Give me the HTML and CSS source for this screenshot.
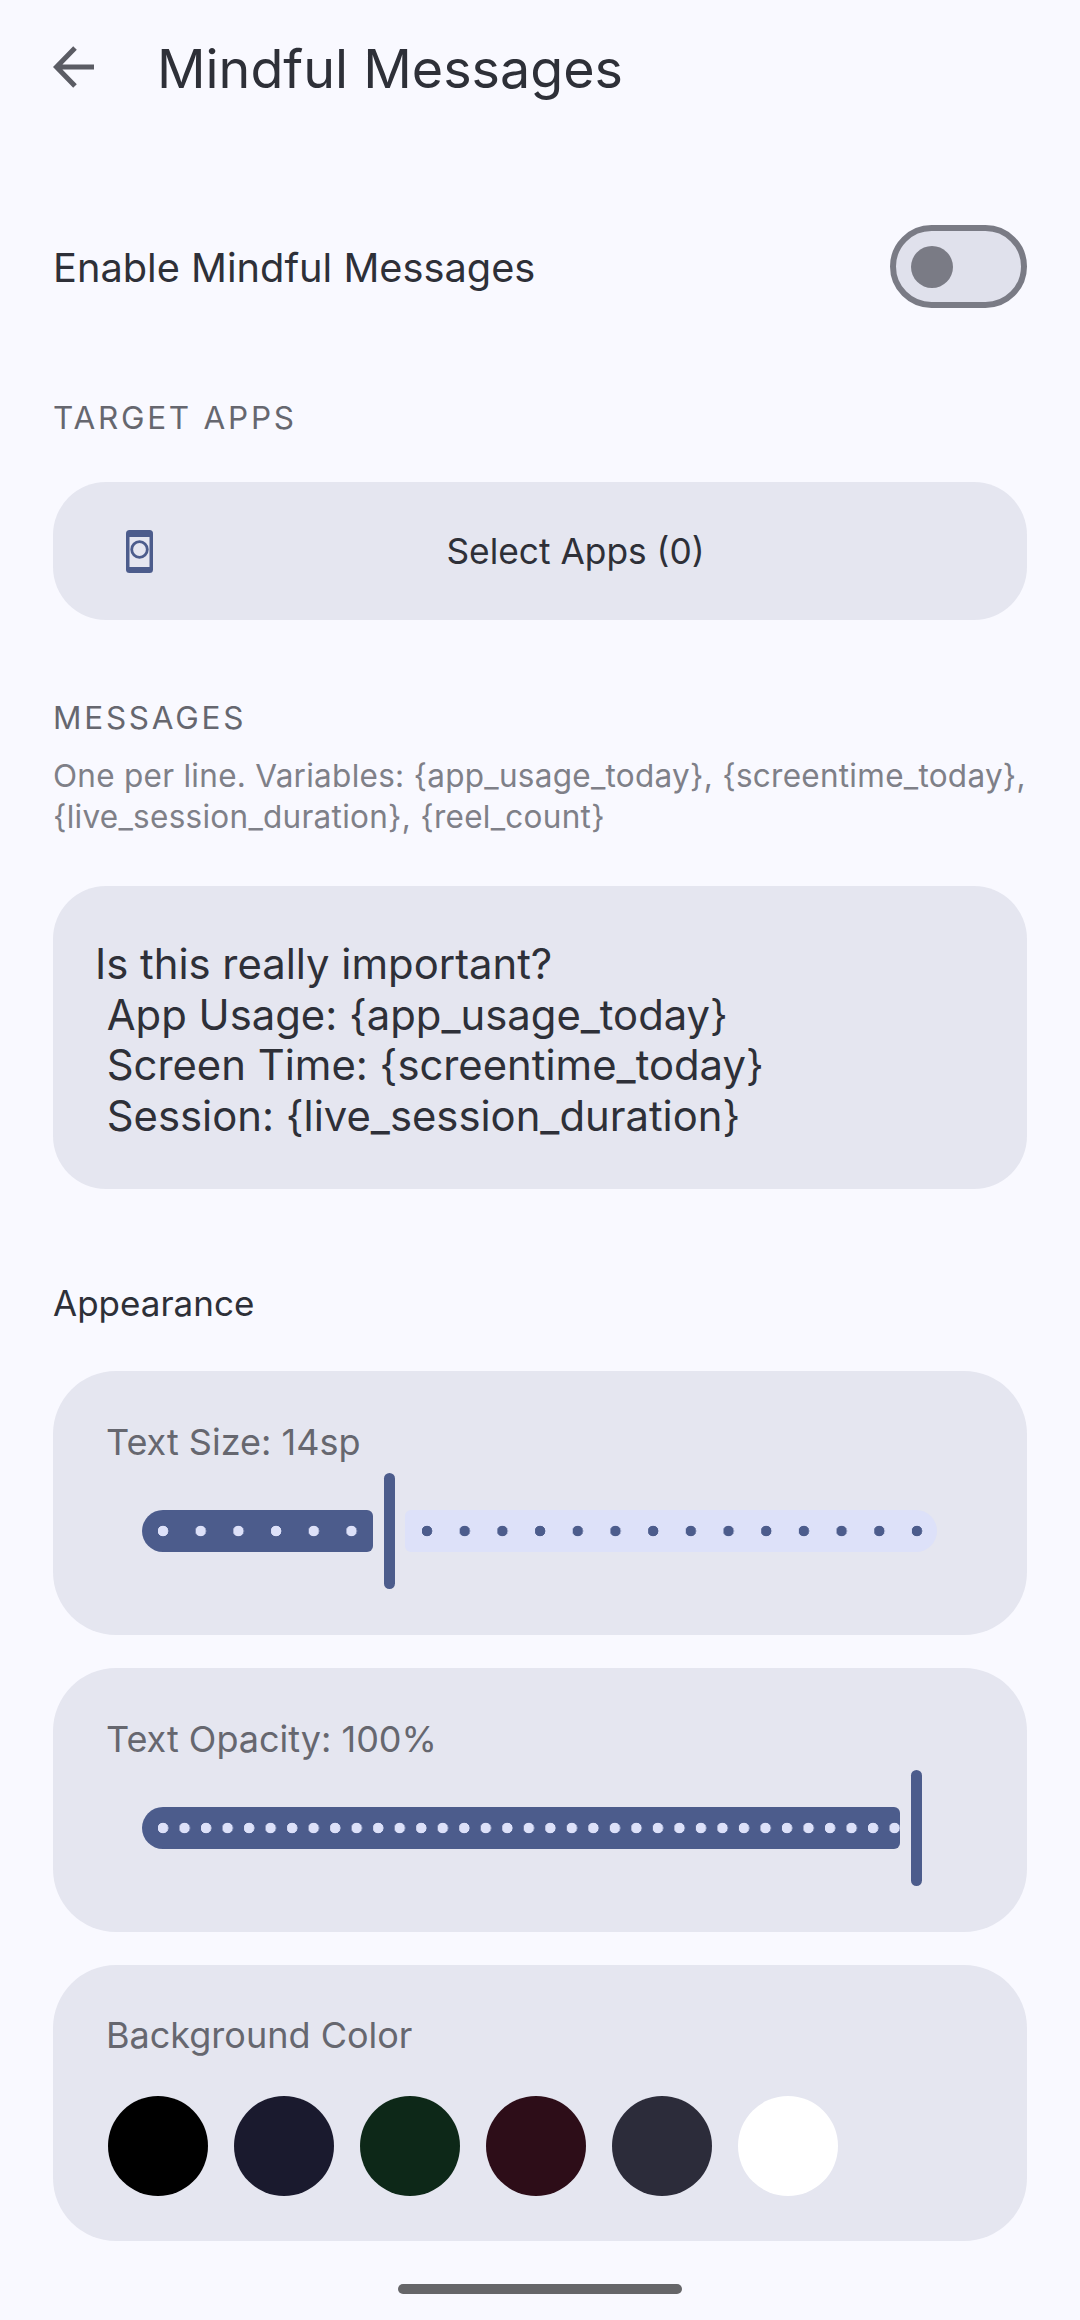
FILE: index.html
```html
<!DOCTYPE html>
<html lang="en">
<head>
<meta charset="utf-8">
<title>Mindful Messages</title>
<link rel="stylesheet" href="styles.css">
</head>
<body>
<main class="screen">
  <header class="topbar">
    <svg class="back" viewBox="0 0 44 44" width="44" height="44"><path d="M41 21H5M22 2 3.5 21 22 40" fill="none" stroke="#5b5c64" stroke-width="5"/></svg>
    <h1 class="title">Mindful Messages</h1>
  </header>
  <div class="enable-row">
    <span class="enable-label">Enable Mindful Messages</span>
    <span class="toggle"><span class="thumb"></span></span>
  </div>
  <div class="section-label target-label">TARGET APPS</div>
  <button class="select-apps">
    <svg class="phone" viewBox="0 0 27 43" width="27" height="43"><rect width="27" height="43" rx="3.5" fill="#4c5c8c"/><rect x="3.5" y="7" width="20" height="30" fill="#e5e6f0"/><circle cx="13.5" cy="19.5" r="7.8" fill="none" stroke="#4c5c8c" stroke-width="2.8"/></svg>
    <span class="select-text">Select Apps (0)</span>
  </button>
  <div class="section-label messages-label">MESSAGES</div>
  <p class="hint">One per line. Variables: {app_usage_today}, {screentime_today}, {live_session_duration}, {reel_count}</p>
  <div class="message-box">Is this really important?
 App Usage: {app_usage_today}
 Screen Time: {screentime_today}
 Session: {live_session_duration}</div>
  <h2 class="appearance">Appearance</h2>
  <section class="card">
    <div class="card-label">Text Size: 14sp</div>
    <div class="slider">
      <div class="active size-active"><div class="dots size-dots"></div></div>
      <div class="handle"></div>
      <div class="inactive"></div>
    </div>
  </section>
  <section class="card">
    <div class="card-label">Text Opacity: 100%</div>
    <div class="slider">
      <div class="active opacity-active"><div class="dots opacity-dots"></div></div>
      <div class="handle"></div>
    </div>
  </section>
  <section class="card color-card">
    <div class="card-label">Background Color</div>
    <div class="swatches">
      <span class="swatch black"></span>
      <span class="swatch navy"></span>
      <span class="swatch green"></span>
      <span class="swatch maroon"></span>
      <span class="swatch slate"></span>
      <span class="swatch white"></span>
    </div>
  </section>
  <div class="home-bar"></div>
</main>
</body>
</html>
```
FILE: styles.css
```css
* { box-sizing: border-box; }
html, body { margin: 0; padding: 0; }
body { background: #f9f9ff; font-family: Inter, Roboto, sans-serif; color: #2e3038; }
.screen { width: 1080px; height: 2320px; padding: 0 53px; overflow: hidden; }

.topbar { height: 138px; display: flex; align-items: center; }
.back { flex: none; margin-top: -2px; }
.title { margin: 0 0 0 60px; font-size: 53.8px; font-weight: 400; line-height: 138px; color: #2e3038; }

.enable-row { margin-top: 87px; height: 83px; display: flex; align-items: center; justify-content: space-between; }
.enable-label { font-size: 39.75px; margin-top: 2px; }
.toggle { width: 137px; height: 83px; border: 6px solid #7a7b85; border-radius: 42px; background: #e0e1ec; display: flex; align-items: center; padding-left: 15px; }
.thumb { width: 42px; height: 42px; border-radius: 50%; background: #7a7b85; }

.section-label { font-size: 31.5px; line-height: 40px; letter-spacing: 2.75px; color: #66676f; }
.target-label { margin-top: 90px; }
.messages-label { margin-top: 78px; }

.select-apps { margin-top: 44px; width: 974px; height: 138px; border: 0; border-radius: 53px; background: #e5e6f0; display: flex; align-items: center; padding: 0 29px 0 73px; font-family: inherit; color: inherit; }
.phone { flex: none; }
.select-text { flex: 1; text-align: center; font-size: 35.3px; }

.hint { margin: 17px 0 0; font-size: 31.5px; line-height: 41px; letter-spacing: 0.27px; color: #7f8088; width: 1000px; }

.message-box { margin-top: 49px; height: 303px; padding: 53px 42px 0; border-radius: 53px; background: #e5e6f0; font-size: 41.8px; line-height: 50.7px; white-space: pre-wrap; }

.appearance { margin: 89px 0 0; font-size: 35px; font-weight: 400; line-height: 50px; }

.card { margin-top: 33px; height: 264px; padding: 46px 53px 45px; border-radius: 63px; background: #e5e6f0; }
.appearance + .card { margin-top: 43px; }
.card-label { font-size: 36px; line-height: 50px; color: #66676f; }

.slider { margin: 6px 0 0 36px; height: 116px; display: flex; align-items: center; }
.active { height: 42px; padding-left: 16px; border-radius: 21px 6px 6px 21px; background: #4c5c8c; }
.size-active { width: 230.5px; }
.opacity-active { width: 758px; }
.dots { height: 42px; background-image: radial-gradient(circle at 5px 21px, #dde1f9 5px, transparent 5.6px); background-repeat: repeat-x; }
.size-dots { background-size: 37.7px 42px; }
.opacity-dots { background-size: 21.53px 42px; }
.handle { flex: none; width: 11px; height: 116px; margin-left: 11px; border-radius: 6px; background: #4c5c8c; }
.inactive { width: 532px; height: 42px; margin-left: 10px; border-radius: 6px 21px 21px 6px; background-color: #dde1f9; background-image: radial-gradient(circle at 5px 21px, #4c5c8c 5px, transparent 5.6px); background-size: 37.7px 42px; background-repeat: repeat-x; background-position: 17px 0; }

.color-card { height: 276px; padding-top: 45px; }
.swatches { margin-top: 36px; margin-left: 2px; display: flex; gap: 26px; }
.swatch { width: 100px; height: 100px; border-radius: 50%; }
.black { background: #000; }
.navy { background: #1a1a2e; }
.green { background: #0d2818; }
.maroon { background: #2d0d18; }
.slate { background: #2c2c3a; }
.white { background: #fff; }

.home-bar { margin: 43px auto 0; width: 284px; height: 10px; border-radius: 5px; background: #666669; }
```
